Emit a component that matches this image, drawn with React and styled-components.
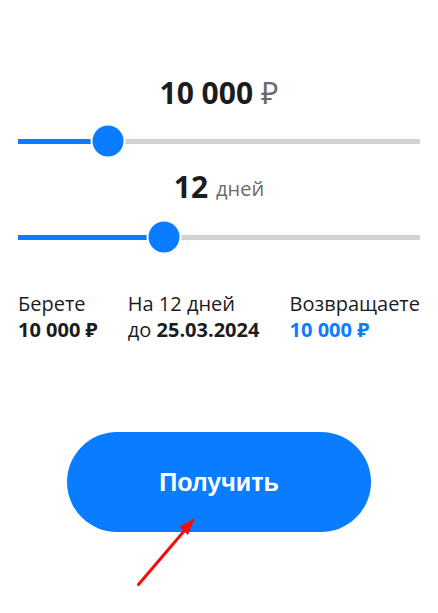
import React from "react";
import styled, { createGlobalStyle } from "styled-components";

const Global = createGlobalStyle`
  html, body { margin: 0; padding: 0; background: #fff; }
  body { font-family: "Open Sans", "Noto Sans", sans-serif; color: #1c1c1c; }
`;

const BLUE = "#0a7cff";

const Page = styled.div`
  position: relative;
  width: 438px;
  height: 613px;
  box-sizing: border-box;
  padding: 73px 18px 0;
  display: flex;
  flex-direction: column;
`;

const Value = styled.div`
  height: 40px;
  display: flex;
  align-items: center;
  justify-content: center;
  gap: 8px;
  margin-bottom: ${(p) => p.$mb}px;
`;

const Big = styled.span`
  font-size: 30px;
  font-weight: 700;
  color: #1c1c1c;
  line-height: 40px;
`;

const Unit = styled.span`
  font-size: ${(p) => p.$size}px;
  font-weight: 400;
  color: #6b6b6b;
  line-height: 40px;
  position: relative;
  top: ${(p) => p.$dy || 0}px;
`;

const SliderBox = styled.div`
  position: relative;
  height: 32px;
  display: flex;
  align-items: center;
  margin-bottom: ${(p) => p.$mb}px;
`;

const Track = styled.div`
  position: relative;
  width: 100%;
  height: 5px;
  background: #d2d2d2;
`;

const Fill = styled.div`
  height: 100%;
  background: ${BLUE};
`;

const Thumb = styled.div`
  position: absolute;
  top: 50%;
  width: 31px;
  height: 31px;
  border-radius: 50%;
  background: ${BLUE};
  box-shadow: 0 0 0 2px #fff;
  transform: translate(-50%, -50%);
`;

const Slider = ({ pct, mb }) => (
  <SliderBox $mb={mb}>
    <Track>
      <Fill style={{ width: `${pct}%` }} />
    </Track>
    <Thumb style={{ left: `${pct}%` }} />
  </SliderBox>
);

const Info = styled.div`
  display: flex;
  justify-content: space-between;
  font-size: 20px;
  line-height: 26px;
  margin-bottom: 89px;
`;

const Col = styled.div`
  display: flex;
  flex-direction: column;
`;

const Strong = styled.span`
  font-weight: 700;
  color: ${(p) => (p.$blue ? BLUE : "#1c1c1c")};
`;

const ButtonRow = styled.div`
  display: flex;
  justify-content: center;
`;

const Button = styled.button`
  width: 304px;
  height: 100px;
  border: none;
  border-radius: 50px;
  background: ${BLUE};
  color: #fff;
  font-family: "Liberation Sans", Arial, sans-serif;
  font-weight: 700;
  font-size: 25px;
  cursor: pointer;
`;

const Arrow = styled.svg`
  position: absolute;
  left: 0;
  top: 0;
  pointer-events: none;
`;

export default function App() {
  return (
    <>
      <Global />
      <Page>
        <Value $mb={12}>
          <Big>10 000</Big>
          <Unit $size={30}>₽</Unit>
        </Value>
        <Slider pct={22.5} mb={10} />
        <Value $mb={14}>
          <Big>12</Big>
          <Unit $size={20} $dy={2}>дней</Unit>
        </Value>
        <Slider pct={36.25} mb={38} />
        <Info>
          <Col>
            <span>Берете</span>
            <Strong>10 000 ₽</Strong>
          </Col>
          <Col>
            <span>На 12 дней</span>
            <span>
              до <Strong>25.03.2024</Strong>
            </span>
          </Col>
          <Col>
            <span>Возвращаете</span>
            <Strong $blue>10 000 ₽</Strong>
          </Col>
        </Info>
        <ButtonRow>
          <Button>Получить</Button>
        </ButtonRow>
        <Arrow width="438" height="613" viewBox="0 0 438 613">
          <line x1="138.5" y1="584.5" x2="185" y2="530" stroke="#f50d0d" strokeWidth="3" strokeLinecap="round" />
          <polygon points="195,518 179,527 188,535" fill="#f50d0d" />
        </Arrow>
      </Page>
    </>
  );
}
